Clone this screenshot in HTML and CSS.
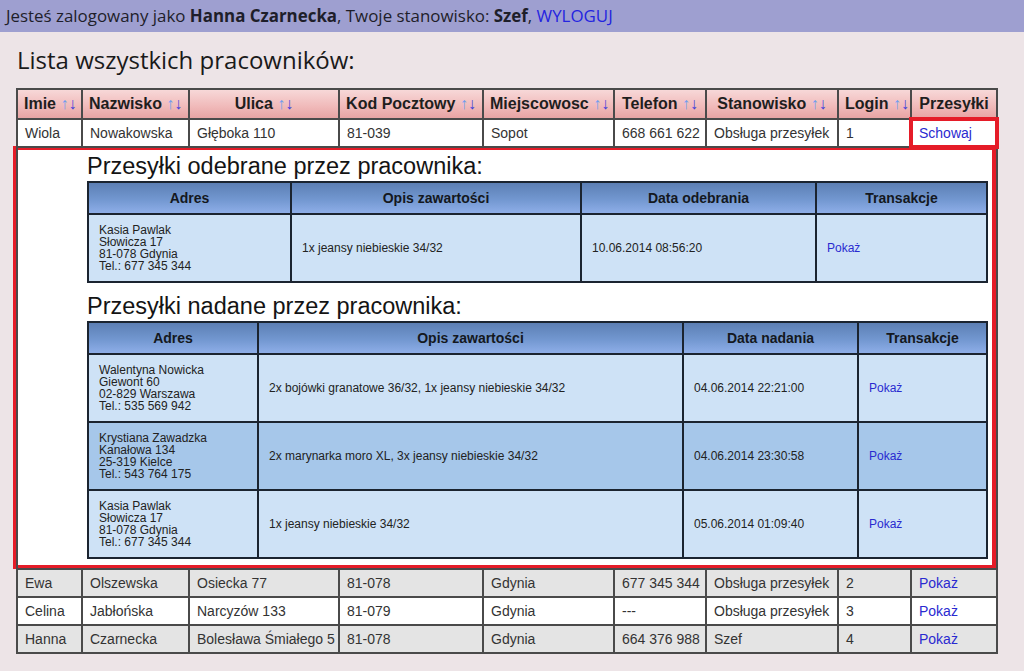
FILE: index.html
```html
<!DOCTYPE html>
<html lang="pl">
<head>
<meta charset="utf-8">
<title>Lista pracowników</title>
<link rel="stylesheet" href="styles.css">
</head>
<body>
<div class="topbar">Jesteś zalogowany jako <b>Hanna Czarnecka</b>, Twoje stanowisko: <b>Szef</b>, <a href="#">WYLOGUJ</a></div>
<h1 class="title">Lista wszystkich pracowników:</h1>
<table class="staff">
  <colgroup>
    <col class="c1"><col class="c2"><col class="c3"><col class="c4"><col class="c5"><col class="c6"><col class="c7"><col class="c8"><col class="c9">
  </colgroup>
  <thead>
    <tr>
      <th class="left">Imie <span class="sort"><i class="up">↑</i><i class="down">↓</i></span></th>
      <th class="left">Nazwisko <span class="sort"><i class="up">↑</i><i class="down">↓</i></span></th>
      <th>Ulica <span class="sort"><i class="up">↑</i><i class="down">↓</i></span></th>
      <th>Kod Pocztowy <span class="sort"><i class="up">↑</i><i class="down">↓</i></span></th>
      <th>Miejscowosc <span class="sort"><i class="up">↑</i><i class="down">↓</i></span></th>
      <th>Telefon <span class="sort"><i class="up">↑</i><i class="down">↓</i></span></th>
      <th>Stanowisko <span class="sort"><i class="up">↑</i><i class="down">↓</i></span></th>
      <th>Login <span class="sort"><i class="up">↑</i><i class="down">↓</i></span></th>
      <th>Przesyłki</th>
    </tr>
  </thead>
  <tbody>
    <tr class="white">
      <td>Wiola</td><td>Nowakowska</td><td>Głęboka 110</td><td>81-039</td><td>Sopot</td><td>668 661 622</td><td>Obsługa przesyłek</td><td>1</td><td class="marked"><a href="#">Schowaj</a></td>
    </tr>
    <tr class="detail">
      <td colspan="9">
        <div class="parcels">
          <h2>Przesyłki odebrane przez pracownika:</h2>
          <table class="inner">
            <colgroup><col class="r1"><col class="r2"><col class="r3"><col class="r4"></colgroup>
            <thead>
              <tr><th>Adres</th><th>Opis zawartości</th><th>Data odebrania</th><th>Transakcje</th></tr>
            </thead>
            <tbody>
              <tr><td class="addr">Kasia Pawlak<br>Słowicza 17<br>81-078 Gdynia<br>Tel.: 677 345 344</td><td>1x jeansy niebieskie 34/32</td><td>10.06.2014 08:56:20</td><td><a href="#">Pokaż</a></td></tr>
            </tbody>
          </table>
          <h2 class="second">Przesyłki nadane przez pracownika:</h2>
          <table class="inner">
            <colgroup><col class="s1"><col class="s2"><col class="s3"><col class="s4"></colgroup>
            <thead>
              <tr><th>Adres</th><th>Opis zawartości</th><th>Data nadania</th><th>Transakcje</th></tr>
            </thead>
            <tbody>
              <tr><td class="addr">Walentyna Nowicka<br>Giewont 60<br>02-829 Warszawa<br>Tel.: 535 569 942</td><td>2x bojówki granatowe 36/32, 1x jeansy niebieskie 34/32</td><td>04.06.2014 22:21:00</td><td><a href="#">Pokaż</a></td></tr>
              <tr class="alt"><td class="addr">Krystiana Zawadzka<br>Kanałowa 134<br>25-319 Kielce<br>Tel.: 543 764 175</td><td>2x marynarka moro XL, 3x jeansy niebieskie 34/32</td><td>04.06.2014 23:30:58</td><td><a href="#">Pokaż</a></td></tr>
              <tr><td class="addr">Kasia Pawlak<br>Słowicza 17<br>81-078 Gdynia<br>Tel.: 677 345 344</td><td>1x jeansy niebieskie 34/32</td><td>05.06.2014 01:09:40</td><td><a href="#">Pokaż</a></td></tr>
            </tbody>
          </table>
        </div>
      </td>
    </tr>
    <tr class="grey">
      <td>Ewa</td><td>Olszewska</td><td>Osiecka 77</td><td>81-078</td><td>Gdynia</td><td>677 345 344</td><td>Obsługa przesyłek</td><td>2</td><td><a href="#">Pokaż</a></td>
    </tr>
    <tr class="white">
      <td>Celina</td><td>Jabłońska</td><td>Narcyzów 133</td><td>81-079</td><td>Gdynia</td><td>---</td><td>Obsługa przesyłek</td><td>3</td><td><a href="#">Pokaż</a></td>
    </tr>
    <tr class="grey">
      <td>Hanna</td><td>Czarnecka</td><td>Bolesława Śmiałego 5</td><td>81-078</td><td>Gdynia</td><td>664 376 988</td><td>Szef</td><td>4</td><td><a href="#">Pokaż</a></td>
    </tr>
  </tbody>
</table>
</body>
</html>
```

FILE: styles.css
```css
html, body {
  margin: 0;
  padding: 0;
  background: #ede4e7;
}

body {
  font-family: "Liberation Sans", Arial, sans-serif;
  color: #333;
}

.topbar {
  height: 32px;
  line-height: 31px;
  padding-left: 6px;
  background: #9e9fd0;
  font-family: "Open Sans", "Noto Sans", sans-serif;
  font-size: 16.9px;
  color: #1e1e2a;
  white-space: nowrap;
}

.topbar b {
  font-weight: 700;
}

.topbar a {
  color: #2424e0;
  text-decoration: none;
}

.title {
  margin: 12px 0 0 17px;
  height: 44px;
  font-family: "Open Sans", "Noto Sans", sans-serif;
  font-weight: 400;
  font-size: 24px;
  line-height: 32px;
  color: #1a1a1a;
  white-space: nowrap;
}

.staff {
  margin-left: 16px;
  width: 980px;
  table-layout: fixed;
  border-collapse: collapse;
  border: 2px solid #4a4a4a;
}

.c1 { width: 65px; }
.c2 { width: 107px; }
.c3 { width: 150px; }
.c4 { width: 144px; }
.c5 { width: 131px; }
.c6 { width: 92px; }
.c7 { width: 132px; }
.c8 { width: 73px; }
.c9 { width: 86px; }

.staff > thead > tr > th {
  height: 28px;
  padding: 0 6px;
  border: 2px solid #4a4a4a;
  background: linear-gradient(#f7d8d8, #f0b9b9 60%, #e8a4a4);
  font-size: 16px;
  font-weight: 700;
  color: #1e1e1e;
  text-align: center;
  white-space: nowrap;
}

.staff > thead > tr > th.left {
  text-align: left;
}

.sort {
  font-size: 16px;
  font-weight: 400;
}

.sort i {
  font-style: normal;
}

.sort .up { color: #6f9cf0; }
.sort .down { color: #4040dc; }

.staff > tbody > tr > td {
  height: 26px;
  padding: 0 7px;
  border: 2px solid #4a4a4a;
  font-size: 14px;
  color: #333;
  white-space: nowrap;
}

.staff > tbody > tr.white > td { background: #ffffff; }
.staff > tbody > tr.grey > td { background: #e4e4e4; }

.staff a {
  color: #2a2ad0;
  text-decoration: none;
}

.staff > tbody > tr > td.marked {
  outline: 4px solid #e51c28;
  outline-offset: -2px;
}

.staff > tbody > tr.detail > td {
  padding: 0;
  height: auto;
  background: #fff;
}

.parcels {
  margin: -2px 0 -1px -5px;
  padding: 2px 8px 6px 70px;
  border: 4px solid #e51c28;
}

.parcels h2 {
  margin: 0;
  height: 29px;
  font-size: 23.5px;
  font-weight: 400;
  line-height: 29px;
  color: #141414;
  white-space: nowrap;
}

.parcels h2.second {
  margin-top: 9px;
}

.inner {
  width: 899px;
  table-layout: fixed;
  border-collapse: collapse;
  border: 2px solid #1b2430;
}

.r1 { width: 203px; }
.r2 { width: 290px; }
.r3 { width: 235px; }
.r4 { width: 171px; }

.s1 { width: 170px; }
.s2 { width: 425px; }
.s3 { width: 175px; }
.s4 { width: 129px; }

.inner th {
  height: 30px;
  padding: 0;
  border: 2px solid #1b2430;
  background: linear-gradient(#5c7fb4, #7297d0 55%, #8eaee8);
  font-size: 14px;
  font-weight: 700;
  color: #141820;
  text-align: center;
}

.inner td {
  height: 48px;
  padding: 9px 10px;
  border: 2px solid #1b2430;
  background: #cee2f6;
  font-size: 12px;
  line-height: 12px;
  color: #222;
  vertical-align: middle;
}

.inner tr.alt td {
  background: #a6c7ea;
}

.inner a {
  color: #2a2ad0;
  text-decoration: none;
}
```
